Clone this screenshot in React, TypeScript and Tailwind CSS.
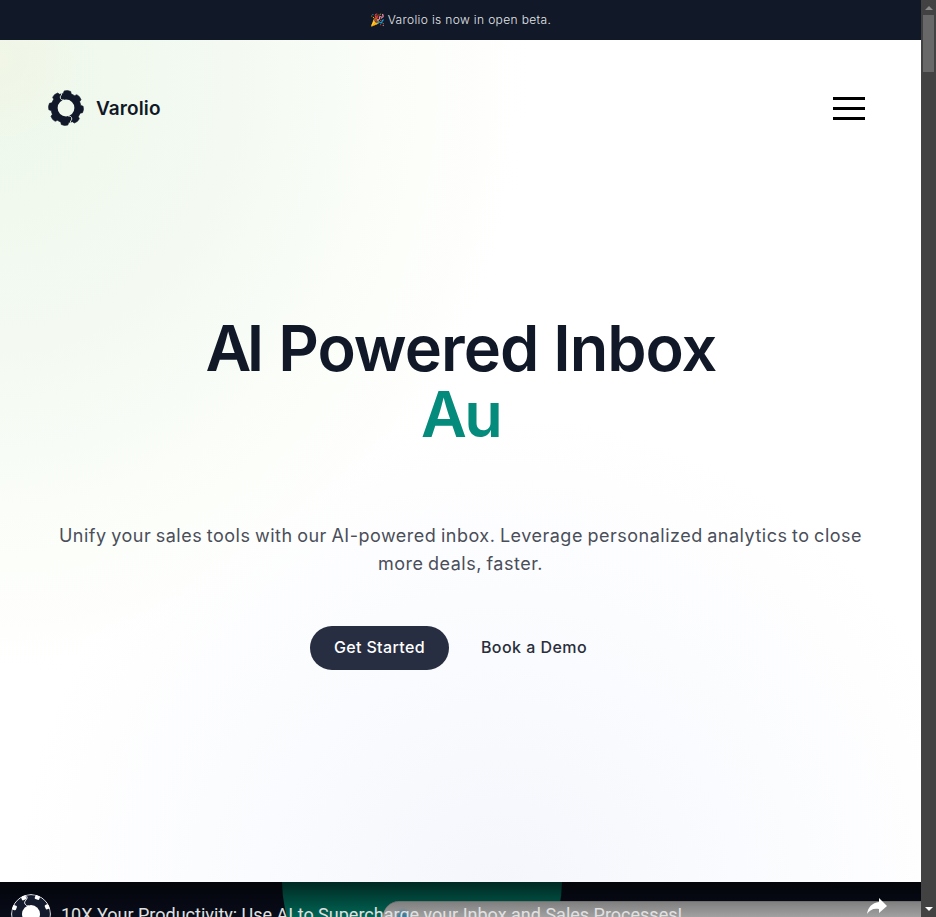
import React from 'react';

// Outline of the eight-toothed gear used by the brand mark, centred on 0,0.
const gearPoints = Array.from({ length: 8 }, (_, i) => {
  const centre = i * 45 + 5;
  return [
    [15.1, -15],
    [17.2, -11],
    [17.6, 0],
    [17.2, 11],
    [15.1, 15],
  ]
    .map(([r, offset]) => {
      const a = ((centre + offset) * Math.PI) / 180;
      return `${(r * Math.cos(a)).toFixed(2)},${(r * Math.sin(a)).toFixed(2)}`;
    })
    .join(' ');
}).join(' ');

function Gear({ className, hole }: { className: string; hole: string }) {
  return (
    <svg viewBox="-18 -18 36 36" className={className} aria-hidden="true">
      <polygon points={gearPoints} fill="#111829" stroke="#111829" strokeWidth="0.6" strokeLinejoin="round" />
      <circle r="8.4" fill={hole} />
      <path d="M-4.5-16C-3-13-7-12-5.5-9.5C-4.5-8-3.5-8-2-8M4.5 16C3 13 7 12 5.5 9.5C4.5 8 3.5 8 2 8" fill="none" stroke={hole} strokeWidth="0.9" />
    </svg>
  );
}

// Channel avatar: the same gear filling a white disc, with white notches at its rim.
function Avatar() {
  return (
    <svg viewBox="-20 -20 40 40" className="mt-3 h-10 w-10 shrink-0 rounded-full" aria-hidden="true">
      <circle r="19.4" fill="#141b2d" stroke="#ffffff" strokeWidth="0.9" />
      {[-159, -114, -69, -24, 21, 66, 111, 156].map((angle) => (
        <rect key={angle} x="15.6" y="-2.4" width="4" height="4.8" rx="1.2" fill="#ffffff" transform={`rotate(${angle})`} />
      ))}
      <circle r="9" fill="#ffffff" />
      <path d="M-4.5-18C-2-15-8-13-6-10C-5-8.500-4-8-2-8" fill="none" stroke="#ffffff" strokeWidth="0.9" />
    </svg>
  );
}

function Scrollbar() {
  return (
    <div className="flex h-full w-[15px] shrink-0 flex-col items-center justify-between bg-[#424242]">
      <div className="flex flex-col items-center">
        <div className="flex h-[15px] items-center">
          <div className="h-0 w-0 border-x-4 border-b-4 border-x-transparent border-b-[#8b8b8b]" />
        </div>
        <div className="h-[57px] w-[11px] bg-[#686868]" />
      </div>
      <div className="flex h-[17px] items-center">
        <div className="h-0 w-0 border-x-4 border-t-4 border-x-transparent border-t-white" />
      </div>
    </div>
  );
}

export default function App() {
  return (
    <div className="flex h-[917px] w-[936px] overflow-hidden bg-white font-['Inter',sans-serif]">
      <div className="flex h-full w-[921px] flex-col overflow-hidden">
        <div className="flex h-10 shrink-0 items-center justify-center gap-[3px] bg-[#111827] text-[12px] font-light text-gray-200">
          <span className="w-[15px] text-[12px]">🎉</span>
          <span className="tracking-[0.35px]">Varolio is now in open beta.</span>
        </div>

        <div className="flex h-[842px] shrink-0 flex-col bg-[radial-gradient(circle_at_0px_20px,#f1f6e6_0px,transparent_90px),radial-gradient(ellipse_530px_600px_at_0px_40px,#eef8ec_0%,#f4faf2_45%,#fcfefa_80%,transparent_100%),radial-gradient(circle_at_500px_860px,#f4f6fc_0px,#fafbfe_240px,#ffffff_490px)]">
          <header className="flex h-[136px] items-center justify-between pr-14 pl-12">
            <div className="flex items-center gap-3">
              <Gear className="h-9 w-9" hole="#f0f8ed" />
              <span className="pt-0.5 text-[19px] font-semibold tracking-[0.1px] text-[#111827]">Varolio</span>
            </div>
            <div className="flex w-8 flex-col gap-[7px]">
              <div className="h-[3px] bg-black" />
              <div className="h-[3px] bg-black" />
              <div className="h-[3px] bg-black" />
            </div>
          </header>

          <main className="flex flex-col items-center pt-[139px] text-center">
            <h1 className="flex flex-col items-center text-[63px] leading-[66px] font-semibold tracking-[-0.98px] text-[#111827]">
              <span className="pl-px whitespace-nowrap">
                <span className="tracking-[-4.5px]">A</span>I Powered Inbox
              </span>
              <span className="tracking-[-2.6px] text-[#058b7b]">Au</span>
            </h1>
            <p className="mt-[75px] text-[18px] leading-7 tracking-[0.5px] [word-spacing:-1px] text-[#4a4e59]">
              <span className="whitespace-nowrap">Unify your sales tools with our AI-powered inbox. Leverage personalized analytics to close</span>
              <br />
              more deals, faster.
            </p>
            <div className="mt-12 flex items-center pr-6">
              <button className="h-11 w-[139px] rounded-full bg-[#272e41] pb-0.5 text-[16px] font-medium tracking-[0.36px] text-white">Get Started</button>
              <button className="ml-8 pb-0.5 text-[16px] font-medium tracking-[0.45px] text-[#292e3b]">Book a Demo</button>
            </div>
          </main>
        </div>

        <div className="relative h-[35px] shrink-0 overflow-hidden bg-[#080c19]">
          <div className="absolute -top-[142px] left-[282px] h-[280px] w-[280px] rounded-full bg-[#006554]" />
          <div className="absolute inset-0 bg-linear-to-b from-black/60 to-transparent" />
          <div className="absolute top-[19px] left-[383px] h-20 w-[560px] rounded-tl-[16px] border-t border-[#707070] bg-linear-to-b from-[#808080] to-[#b4b4b4] to-30%" />
          <div className="absolute top-[29px] left-[396px] h-5 w-3.5 rounded-full bg-[#38799a] blur-[2px]" />
          <div className="relative flex items-start pl-[11px]">
            <Avatar />
            <span className="mt-[19px] ml-[10px] font-['Roboto',sans-serif] text-[18px] leading-[27px] whitespace-nowrap text-[#e0e0e0]">
              10X Your Productivity: Use AI to Supercharge your Inbox and Sales Processes!
            </span>
          </div>
          <svg viewBox="0 0 20 16" className="absolute top-4 left-[867px] h-4 w-5" aria-hidden="true">
            <path d="M12 0L20 8L12 15V11C6 10 3 12 0 16C1 9 5 5 12 4Z" fill="white" />
          </svg>
        </div>
      </div>
      <Scrollbar />
    </div>
  );
}
